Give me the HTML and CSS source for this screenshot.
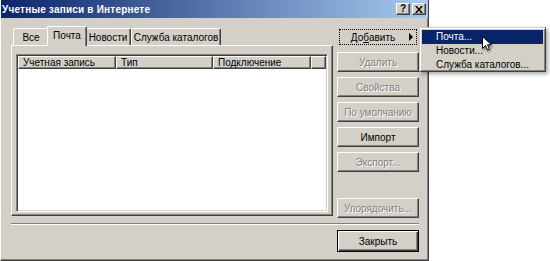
FILE: index.html
```html
<!DOCTYPE html>
<html lang="ru">
<head>
  <meta charset="UTF-8">
  <title>Учетные записи в Интернете</title>
  <link rel="stylesheet" href="styles.css">
</head>
<body>

  <div class="window">
    <div class="titlebar">
      <span class="title">Учетные записи в Интернете</span>
      <div class="title-buttons">
        <span class="tbtn help">?</span>
        <span class="tbtn close">
          <svg width="8" height="7" viewBox="0 0 8 7">
            <path d="M0 0h2l2 2.5L6 0h2L5 3.5 8 7H6L4 4.5 2 7H0l3-3.5z" fill="#000"/>
          </svg>
        </span>
      </div>
    </div>

    <div class="content">
      <div class="main">
        <div class="tabarea">
          <div class="tabs">
            <div class="tab tab-all">Все</div>
            <div class="tab tab-mail active">Почта</div>
            <div class="tab tab-news">Новости</div>
            <div class="tab tab-dir">Служба каталогов</div>
          </div>
          <div class="panel">
            <div class="listview">
              <div class="lv-header">
                <div class="col col-account">Учетная запись</div>
                <div class="col col-type">Тип</div>
                <div class="col col-conn">Подключение</div>
                <div class="col col-fill"></div>
              </div>
            </div>
          </div>
        </div>

        <div class="buttons">
          <button class="btn menu-btn">
            <span class="focus-rect">До<u>б</u>авить</span>
            <span class="arrow"></span>
          </button>
          <button class="btn disabled">Удалить</button>
          <button class="btn disabled">Свойства</button>
          <button class="btn disabled">По умолчанию</button>
          <button class="btn">Импорт</button>
          <button class="btn disabled">Экспорт...</button>
          <button class="btn disabled arrange">Упорядочить...</button>
        </div>
      </div>

      <div class="separator"></div>

      <div class="footer">
        <button class="btn default">Закрыть</button>
      </div>
    </div>
  </div>

  <!-- submenu of the Добавить button -->
  <div class="popup">
    <div class="item selected">Почта...</div>
    <div class="item">Новости...</div>
    <div class="item">Служба каталогов...</div>
  </div>

  <svg class="cursor" width="11" height="16" viewBox="0 0 11 16">
    <path d="M0.5 0.5V12.5L3.5 9.5L5.5 14L7.5 13L5.5 8.8H9.5Z" fill="#fff" stroke="#000" stroke-width="1"/>
  </svg>

</body>
</html>
```

FILE: styles.css
```css
* {
  box-sizing: border-box;
}

body {
  margin: 0;
  background-color: #fff;
  font-family: "Liberation Sans", Arial, sans-serif;
  font-size: 10px;
  color: #000;
  white-space: nowrap;
}

.window {
  width: 429px;
  height: 261px;
  background-color: #d4d0c8;
  border-right: 1px solid #404040;
  border-bottom: 1px solid #404040;
  border-left: 1px solid #fff;
  box-shadow: inset -1px -1px #808080;
}

.titlebar {
  height: 18px;
  display: flex;
  align-items: center;
  justify-content: space-between;
  padding: 0 2px 0 1px;
  background: linear-gradient(to right, #0a246a, #a6caf0);
}

.title {
  color: #fff;
  font-weight: bold;
  font-size: 10px;
  letter-spacing: 0.2px;
}

.title-buttons {
  display: flex;
  gap: 2px;
}

.tbtn {
  width: 14px;
  height: 12px;
  display: flex;
  align-items: center;
  justify-content: center;
  background-color: #d4d0c8;
  border: 1px solid;
  border-color: #fff #404040 #404040 #fff;
  box-shadow: inset -1px -1px #808080;
  font-weight: bold;
  font-size: 10px;
  line-height: 1;
}

.content {
  padding: 8px 9px 0 10px;
}

.main {
  display: flex;
  gap: 4px;
  height: 191px;
  align-items: flex-start;
}

.tabarea {
  width: 322px;
}

.tabs {
  display: flex;
  align-items: flex-start;
  height: 19px;
  padding-left: 2px;
}

.tab {
  height: 17px;
  margin-top: 2px;
  display: flex;
  align-items: center;
  justify-content: center;
  border-top: 1px solid #fff;
  border-left: 1px solid #fff;
  border-right: 1px solid #404040;
  border-radius: 2px 2px 0 0;
  box-shadow: inset -1px 0 #808080;
  background-color: #d4d0c8;
}

.tab-all {
  width: 36px;
}

.tab-mail {
  width: 36px;
}

.tab-news {
  width: 46px;
}

.tab-dir {
  width: 90px;
}

.tab.active {
  position: relative;
  z-index: 2;
  height: 20px;
  margin: 0 -2px;
  width: 40px;
  padding-bottom: 2px;
}

.panel {
  height: 171px;
  padding: 8px 4px 3px 4px;
  border: 1px solid;
  border-color: #fff #404040 #404040 #fff;
  box-shadow: inset -1px -1px #808080;
}

.listview {
  height: 158px;
  padding: 1px;
  background-color: #fff;
  border: 1px solid;
  border-color: #808080 #fff #fff #808080;
  box-shadow: inset 1px 1px #404040, inset -1px -1px #d4d0c8;
}

.lv-header {
  display: flex;
  height: 13px;
}

.col {
  height: 13px;
  padding-left: 4px;
  line-height: 11px;
  background-color: #d4d0c8;
  border: 1px solid;
  border-color: #fff #404040 #404040 #fff;
  box-shadow: inset -1px -1px #808080;
  overflow: hidden;
}

.col-account {
  width: 98px;
}

.col-type {
  width: 97px;
}

.col-conn {
  width: 98px;
}

.col-fill {
  flex: 1;
}

.buttons {
  width: 82px;
  display: flex;
  flex-direction: column;
  gap: 5px;
  padding-top: 1px;
}

.btn {
  width: 82px;
  height: 20px;
  padding: 0;
  font-family: inherit;
  font-size: 10px;
  color: #000;
  background-color: #d4d0c8;
  border: 1px solid;
  border-color: #fff #404040 #404040 #fff;
  box-shadow: inset -1px -1px #808080;
}

.btn.disabled {
  color: #808080;
  text-shadow: 1px 1px #fff;
}

.btn.arrange {
  margin-top: 21px;
}

.menu-btn {
  position: relative;
  border-color: #d4d0c8;
  box-shadow: none;
  padding: 1px;
}

.menu-btn .focus-rect {
  display: flex;
  align-items: center;
  justify-content: center;
  height: 100%;
  border: 1px dotted #000;
  padding-right: 10px;
}

.menu-btn .arrow {
  position: absolute;
  right: 5px;
  top: 5px;
  border-left: 4px solid #000;
  border-top: 4px solid transparent;
  border-bottom: 4px solid transparent;
}

.separator {
  margin-top: 6px;
  height: 2px;
  border-top: 1px solid #808080;
  border-bottom: 1px solid #fff;
}

.footer {
  display: flex;
  justify-content: flex-end;
  margin-top: 5px;
}

.btn.default {
  height: 22px;
  border: 1px solid #000;
  box-shadow: inset 1px 1px #fff, inset -1px -1px #404040, inset -2px -2px #808080;
}

.popup {
  position: absolute;
  left: 419px;
  top: 27px;
  width: 127px;
  height: 45px;
  padding: 2px;
  background-color: #d4d0c8;
  border: 1px solid;
  border-color: #d4d0c8 #404040 #404040 #d4d0c8;
  box-shadow: inset 1px 1px #fff, inset -1px -1px #808080, 2px 2px 4px rgba(0, 0, 0, 0.35);
}

.item {
  height: 14px;
  line-height: 14px;
  padding-left: 14px;
}

.item.selected {
  background-color: #0a246a;
  color: #fff;
}

.cursor {
  position: absolute;
  left: 482px;
  top: 36px;
  filter: drop-shadow(1px 2px 1px rgba(0, 0, 0, 0.4));
}
```
